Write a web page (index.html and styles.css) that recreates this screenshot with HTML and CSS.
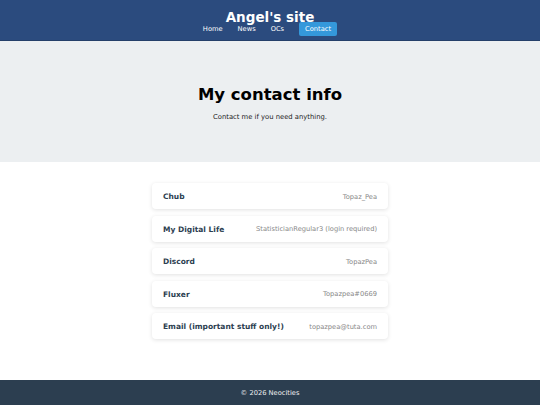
FILE: index.html
```html
<!DOCTYPE html>
<html>
<head>
<meta charset="utf-8">
<link rel="stylesheet" href="styles.css">
</head>
<body>
<header class="site-header">
  <div class="site-title">Angel's site</div>
  <nav class="nav">
    <a class="nav-link" href="#">Home</a>
    <a class="nav-link" href="#">News</a>
    <a class="nav-link" href="#">OCs</a>
    <a class="nav-link active" href="#">Contact</a>
  </nav>
</header>
<section class="hero">
  <h1 class="hero-title">My contact info</h1>
  <p class="hero-sub">Contact me if you need anything.</p>
</section>
<main class="main">
  <div class="card-list">
    <div class="card"><span class="label">Chub</span><span class="value">Topaz_Pea</span></div>
    <div class="card"><span class="label">My Digital Life</span><span class="value">StatisticianRegular3 (login required)</span></div>
    <div class="card"><span class="label">Discord</span><span class="value">TopazPea</span></div>
    <div class="card"><span class="label">Fluxer</span><span class="value">Topazpea#0669</span></div>
    <div class="card"><span class="label">Email (important stuff only!)</span><span class="value">topazpea@tuta.com</span></div>
  </div>
</main>
<footer class="footer">© 2026 Neocities</footer>
</body>
</html>
```
FILE: styles.css
```css
* { box-sizing: border-box; }
html, body { margin: 0; padding: 0; }
body {
  font-family: "DejaVu Sans", Verdana, sans-serif;
  background: #ffffff;
  color: #222;
  width: 540px;
  height: 405px;
  display: flex;
  flex-direction: column;
}
.site-header {
  background: #2b4b7e;
  height: 41px;
  display: flex;
  flex-direction: column;
  align-items: center;
  padding-top: 10px;
  border-bottom: 1px solid #243f6a;
}
.site-title {
  color: #fff;
  font-weight: bold;
  font-size: 13.5px;
  line-height: 15px;
}
.nav {
  display: flex;
  gap: 3px;
  margin-top: -3px;
  padding-right: 6px;
}
.nav-link {
  color: #fff;
  text-decoration: none;
  font-size: 6.7px;
  line-height: 14px;
  padding: 0 6px;
  border-radius: 2px;
}
.nav-link.active {
  background: #3498db;
  margin-left: 6px;
}
.hero {
  background: #eceff1;
  height: 121px;
  text-align: center;
  padding-top: 44px;
}
.hero-title {
  margin: 0;
  font-size: 16.5px;
  line-height: 20px;
  font-weight: bold;
  color: #000;
}
.hero-sub {
  margin: 8px 0 0;
  font-size: 6.8px;
  line-height: 8px;
  color: #222;
}
.main {
  flex: 1;
  display: flex;
  justify-content: center;
  padding-top: 21px;
}
.card-list {
  width: 236px;
  display: flex;
  flex-direction: column;
  gap: 6.5px;
}
.card {
  height: 26px;
  background: #fff;
  border-radius: 4px;
  box-shadow: 0 1px 4px rgba(0,0,0,0.12);
  display: flex;
  justify-content: space-between;
  align-items: center;
  padding: 1px 11px 0;
}
.label {
  font-size: 7.5px;
  font-weight: bold;
  color: #2c3e50;
}
.value {
  font-size: 6.7px;
  color: #888;
}
.footer {
  background: #2c3e50;
  color: #f0f0f0;
  height: 25px;
  display: flex;
  align-items: center;
  justify-content: center;
  font-size: 6.7px;
}
```
